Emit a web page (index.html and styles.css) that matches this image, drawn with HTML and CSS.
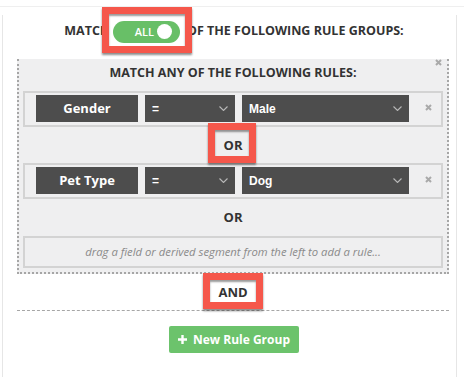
FILE: index.html
```html
<!DOCTYPE html>
<html lang="en">
<head>
    <meta charset="UTF-8">
    <title>Segment rules</title>
    <link rel="stylesheet" href="styles.css">
</head>
<body>
    <div class="topbar"></div>
    <div class="panel">
        <div class="match-line">
            MATCH <span class="mark mark-toggle"><span class="toggle"><span class="toggle-label">ALL</span><span class="knob"></span></span></span> OF THE FOLLOWING RULE GROUPS:
        </div>

        <div class="group">
            <span class="close close-group">
                <svg width="7" height="7" viewBox="0 0 7 7"><path d="M1 1L6 6M6 1L1 6" stroke="#a9a9a9" stroke-width="2"/></svg>
            </span>
            <div class="group-title">MATCH ANY OF THE FOLLOWING RULES:</div>

            <div class="rule">
                <div class="field">Gender</div>
                <div class="select op"><span>=</span>
                    <svg width="9" height="5" viewBox="0 0 9 5"><path d="M0.5 0.5L4.5 4.5L8.5 0.5" fill="none" stroke="#b8b8b8" stroke-width="1.1"/></svg>
                </div>
                <div class="select value"><span>Male</span>
                    <svg width="9" height="5" viewBox="0 0 9 5"><path d="M0.5 0.5L4.5 4.5L8.5 0.5" fill="none" stroke="#b8b8b8" stroke-width="1.1"/></svg>
                </div>
                <span class="close close-rule">
                    <svg width="7" height="7" viewBox="0 0 7 7"><path d="M1 1L6 6M6 1L1 6" stroke="#a9a9a9" stroke-width="2"/></svg>
                </span>
            </div>

            <div class="conn"><span class="mark mark-or">OR</span></div>

            <div class="rule">
                <div class="field">Pet Type</div>
                <div class="select op"><span>=</span>
                    <svg width="9" height="5" viewBox="0 0 9 5"><path d="M0.5 0.5L4.5 4.5L8.5 0.5" fill="none" stroke="#b8b8b8" stroke-width="1.1"/></svg>
                </div>
                <div class="select value"><span>Dog</span>
                    <svg width="9" height="5" viewBox="0 0 9 5"><path d="M0.5 0.5L4.5 4.5L8.5 0.5" fill="none" stroke="#b8b8b8" stroke-width="1.1"/></svg>
                </div>
                <span class="close close-rule">
                    <svg width="7" height="7" viewBox="0 0 7 7"><path d="M1 1L6 6M6 1L1 6" stroke="#a9a9a9" stroke-width="2"/></svg>
                </span>
            </div>

            <div class="conn conn-last">OR</div>

            <div class="dropzone">drag a field or derived segment from the left to add a rule...</div>
        </div>

        <div class="conn-and"><span class="mark mark-and">AND</span></div>

        <div class="actions">
            <button type="button" class="new-group">
                <svg width="9" height="9" viewBox="0 0 9 9"><path d="M4.5 0V9M0 4.5H9" stroke="#fff" stroke-width="2.4"/></svg>
                New Rule Group
            </button>
        </div>
    </div>
</body>
</html>
```

FILE: styles.css
```css
body {
    margin: 0;
    font-family: "Open Sans", Arial, sans-serif;
    background-color: #fff;
    color: #333;
}
.topbar {
    height: 6px;
    border-bottom: 1px solid #efefef;
}
.panel {
    box-sizing: border-box;
    min-height: 370px;
    margin: 8px 7px 0 2px;
    padding: 0 7px 0 14px;
    border-left: 1px solid #e6e6e6;
    border-right: 1px solid #e6e6e6;
}
.match-line {
    height: 44px;
    box-sizing: border-box;
    padding-top: 5px;
    padding-left: 2px;
    line-height: 22px;
    text-align: center;
    font-size: 12.5px;
    font-weight: bold;
    color: #333;
}

/* red annotation frames */
.mark {
    position: relative;
}
.mark::after {
    content: "";
    position: absolute;
    border: 7px solid #f5574b;
    box-shadow: 0 2px 2px rgba(0, 0, 0, 0.45), inset 0 2px 2px rgba(0, 0, 0, 0.4);
    pointer-events: none;
}
.mark-toggle {
    display: inline-block;
    vertical-align: middle;
    margin-right: 4px;
}
.mark-toggle::after {
    top: -14px;
    left: -11px;
    right: -12px;
    bottom: -10px;
}
.toggle {
    display: flex;
    align-items: center;
    width: 67px;
    height: 22px;
    box-sizing: border-box;
    padding-left: 22px;
    background-color: #68bf67;
    border-radius: 11px;
}
.toggle-label {
    font-size: 11px;
    font-weight: 600;
    color: #fff;
    line-height: 22px;
}
.knob {
    width: 15px;
    height: 15px;
    margin-left: 3px;
    border-radius: 50%;
    background-color: #fff;
}

.group {
    position: relative;
    background-color: #efeff0;
    border: 2px dotted #a6a6a6;
    border-top: none;
    padding: 0 4px 4px;
}
.close {
    display: flex;
}
.close-group {
    position: absolute;
    top: 0;
    right: 5px;
}
.group-title {
    height: 32px;
    line-height: 27px;
    text-align: center;
    font-size: 12.5px;
    font-weight: bold;
}
.rule {
    display: flex;
    align-items: center;
    height: 36px;
    box-sizing: border-box;
    border: 2px solid #d3d3d3;
    padding: 0 0 1px 11px;
}
.field {
    width: 102px;
    height: 27px;
    line-height: 27px;
    text-align: center;
    background-color: #4d4d4d;
    color: #fff;
    font-size: 13px;
    font-weight: bold;
}
.select {
    display: flex;
    align-items: center;
    justify-content: space-between;
    height: 27px;
    box-sizing: border-box;
    padding: 0 7px;
    margin-left: 7px;
    background-color: #4d4d4d;
    color: #fff;
    font-family: "Liberation Sans", Arial, sans-serif;
    font-size: 12px;
    font-weight: bold;
}
.op {
    width: 90px;
}
.value {
    width: 167px;
}
.close-rule {
    margin-left: 16px;
    margin-top: -3px;
}
.conn {
    height: 36px;
    line-height: 36px;
    text-align: center;
    font-size: 13px;
    font-weight: bold;
}
.conn-last {
    height: 37px;
}
.mark-or {
    display: inline-block;
    line-height: 18px;
}
.mark-or::after {
    top: -13px;
    left: -16px;
    right: -14px;
    bottom: -9px;
}
.dropzone {
    height: 32px;
    box-sizing: border-box;
    border: 2px solid #d3d3d3;
    line-height: 28px;
    text-align: center;
    font-size: 11.3px;
    font-style: italic;
    color: #8a8a8a;
}
.conn-and {
    height: 37px;
    box-sizing: border-box;
    border-bottom: 1px dashed #a6a6a6;
    line-height: 36px;
    text-align: center;
    font-size: 13px;
    font-weight: bold;
}
.mark-and {
    display: inline-block;
    line-height: 18px;
}
.mark-and::after {
    top: -10px;
    left: -15px;
    right: -15px;
    bottom: -8px;
}
.actions {
    display: flex;
    justify-content: center;
    padding-top: 15px;
}
.new-group {
    display: flex;
    align-items: center;
    justify-content: center;
    gap: 6px;
    width: 130px;
    height: 27px;
    margin-left: 2px;
    background-color: #6cc36c;
    color: #fff;
    border: none;
    border-radius: 2px;
    font-family: "Open Sans", Arial, sans-serif;
    font-size: 12px;
    font-weight: bold;
    cursor: pointer;
}
```
